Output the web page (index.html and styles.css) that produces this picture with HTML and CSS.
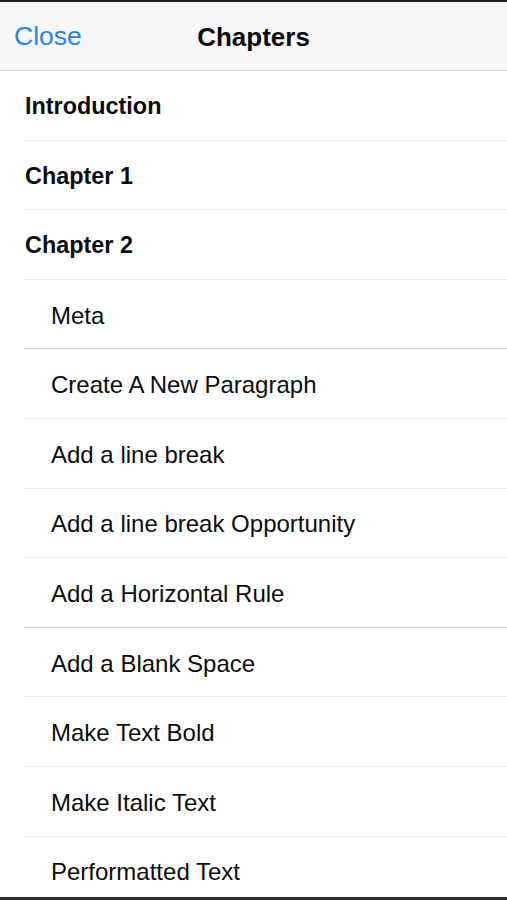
FILE: index.html
```html
<!DOCTYPE html>
<html>
<head>
<meta charset="utf-8">
<link rel="stylesheet" href="styles.css">
</head>
<body>
<div class="screen">
  <div class="topline"></div>
  <header class="nav">
    <span class="close">Close</span>
    <span class="title">Chapters</span>
  </header>
  <ul class="list">
    <li class="row chapter">Introduction</li>
    <li class="row chapter">Chapter 1</li>
    <li class="row chapter">Chapter 2</li>
    <li class="row sub dark">Meta</li>
    <li class="row sub">Create A New Paragraph</li>
    <li class="row sub">Add a line break</li>
    <li class="row sub">Add a line break Opportunity</li>
    <li class="row sub dark">Add a Horizontal Rule</li>
    <li class="row sub">Add a Blank Space</li>
    <li class="row sub">Make Text Bold</li>
    <li class="row sub">Make Italic Text</li>
    <li class="row sub">Performatted Text</li>
  </ul>
  <div class="bottomline"></div>
</div>
</body>
</html>
```
FILE: styles.css
```css
html, body {
  margin: 0;
  padding: 0;
  background: #ffffff;
}
body {
  font-family: "Liberation Sans", Arial, sans-serif;
  color: #111;
}
.screen {
  height: 900px;
  display: flex;
  flex-direction: column;
  overflow: hidden;
}
.topline {
  height: 2px;
  background: #1e1e1e;
  flex: none;
}
.nav {
  flex: none;
  height: 68px;
  background: #f7f7f7;
  border-bottom: 1px solid #d9d9d9;
  position: relative;
  display: flex;
  align-items: center;
  justify-content: center;
}
.close {
  position: absolute;
  left: 14px;
  top: 50%;
  transform: translateY(-48%);
  color: #1f85f2;
  font-size: 26.5px;
}
.title {
  font-weight: bold;
  font-size: 26px;
  color: #0a0a0a;
  margin-top: 2px;
}
.list {
  list-style: none;
  margin: 0;
  padding: 0;
  flex: 1;
  overflow: hidden;
}
.row {
  box-sizing: border-box;
  height: 69.6px;
  margin-left: 24px;
  padding-top: 3px;
  border-bottom: 1px solid #ececec;
  display: flex;
  align-items: center;
  font-size: 24px;
  color: #0c0c0c;
}
.row.dark {
  border-bottom-color: #d8d8d8;
}
.chapter {
  font-weight: bold;
  padding-left: 1px;
  font-size: 23.4px;
}
.sub {
  padding-left: 27px;
}
.bottomline {
  flex: none;
  height: 3px;
  background: #2e2e2e;
}
```
